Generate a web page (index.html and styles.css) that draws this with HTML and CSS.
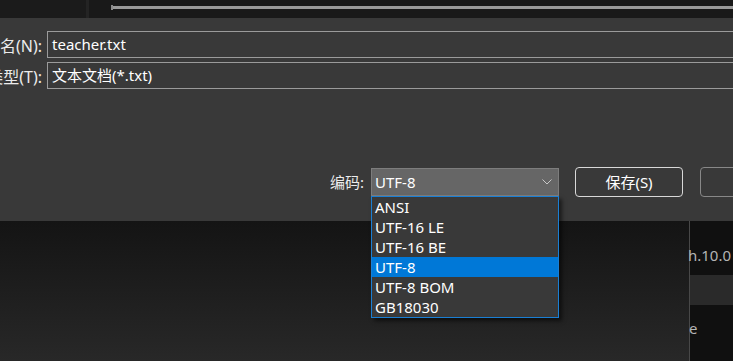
FILE: index.html
```html
<!DOCTYPE html>
<html lang="zh-CN">
<head>
<meta charset="utf-8">
<title>另存为</title>
<link rel="stylesheet" href="styles.css">
</head>
<body>
<div class="screen">
  <div class="topbar">
    <div class="side-col"></div>
    <div class="side-divider"></div>
    <div class="track"><span class="track-nub"></span><span class="track-bar"></span></div>
  </div>

  <div class="dialog">
    <div class="field-row first">
      <div class="label">文件名(N):</div>
      <div class="textbox">teacher.txt</div>
    </div>
    <div class="field-row">
      <div class="label">保存类型(T):</div>
      <div class="textbox">文本文档(*.txt)</div>
    </div>

    <div class="action-row">
      <div class="enc-label">编码:</div>
      <div class="enc-select">
        <div class="enc-value">UTF-8</div>
        <svg class="chevron" width="10" height="6" viewBox="0 0 10 6"><path d="M0.5 0.5 L5 5 L9.5 0.5" fill="none" stroke="#c8c8c8" stroke-width="1"/></svg>
        <ul class="enc-list">
          <li>ANSI</li>
          <li>UTF-16 LE</li>
          <li>UTF-16 BE</li>
          <li class="selected">UTF-8</li>
          <li>UTF-8 BOM</li>
          <li>GB18030</li>
        </ul>
      </div>
      <button class="btn primary">保存(S)</button>
      <button class="btn secondary">取消</button>
    </div>
  </div>

  <div class="lower">
    <div class="backdrop"></div>
    <div class="vline"></div>
    <div class="side-panel">
      <div class="sp-text one">h.10.0</div>
      <div class="sp-band"></div>
      <div class="sp-text two">e</div>
    </div>
  </div>
</div>
</body>
</html>
```

FILE: styles.css
```css
html, body {
  margin: 0;
  padding: 0;
  background: #161616;
}

.screen {
  width: 733px;
  height: 361px;
  overflow: hidden;
  display: flex;
  flex-direction: column;
  font-family: "Noto Sans", "Noto Sans CJK SC", sans-serif;
  font-size: 15px;
  color: #ffffff;
}

/* top strip */
.topbar {
  height: 18px;
  flex: none;
  display: flex;
  background: #191919;
}
.side-col {
  width: 86px;
  background: #1b1b1b;
}
.side-divider {
  width: 3px;
  background: #242424;
}
.track {
  flex: 1;
  display: flex;
  align-items: flex-start;
  padding-left: 22px;
  padding-top: 5px;
}
.track-nub {
  width: 2px;
  height: 5px;
  background: #8a8a8a;
}
.track-bar {
  flex: 1;
  height: 3px;
  margin-top: 1px;
  background: #9a9a9a;
}

/* dialog */
.dialog {
  height: 203px;
  flex: none;
  background: #393939;
  display: flex;
  flex-direction: column;
  position: relative;
  z-index: 2;
}
.field-row {
  display: flex;
  align-items: center;
  gap: 5px;
  margin-top: 4px;
  height: 27px;
}
.field-row.first {
  margin-top: 13px;
}
.label {
  width: 42px;
  flex: none;
  display: flex;
  justify-content: flex-end;
  white-space: nowrap;
  color: #ececec;
  font-size: 16px;
}
.textbox {
  width: 720px;
  flex: none;
  height: 27px;
  box-sizing: border-box;
  border: 1px solid #9b9b9b;
  background: #393939;
  padding: 0 4px;
  line-height: 25px;
  white-space: nowrap;
}

.action-row {
  display: flex;
  align-items: center;
  margin-top: 78px;
  padding-left: 330px;
  height: 29px;
}
.enc-label {
  color: #ececec;
  width: 41px;
  flex: none;
}
.enc-select {
  position: relative;
  width: 188px;
  height: 28px;
  box-sizing: border-box;
  border: 1px solid #7d7d7d;
  background: #666666;
  display: flex;
  align-items: center;
  padding-left: 3px;
  flex: none;
}
.enc-value {
  flex: 1;
  line-height: 26px;
}
.chevron {
  margin-right: 6px;
  margin-top: 1px;
}
.enc-list {
  position: absolute;
  left: -1px;
  top: 27px;
  width: 188px;
  box-sizing: border-box;
  margin: 0;
  padding: 0;
  list-style: none;
  border: 1px solid #1a7fd4;
  background: #393939;
  box-shadow: 3px 3px 4px rgba(0, 0, 0, 0.55);
}
.enc-list li {
  height: 20px;
  line-height: 20px;
  padding-left: 3px;
  white-space: nowrap;
}
.enc-list li.selected {
  background: #0078d7;
}

.btn {
  flex: none;
  height: 30px;
  box-sizing: border-box;
  border-radius: 4px;
  background: #393939;
  color: #ffffff;
  font-family: "Noto Sans", "Noto Sans CJK SC", sans-serif;
  font-size: 15px;
  padding: 0;
}
.btn.primary {
  width: 108px;
  margin-left: 16px;
  border: 1px solid #d8d8d8;
}
.btn.secondary {
  width: 108px;
  margin-left: 17px;
  border: 1px solid #888888;
  color: transparent;
}

/* lower background */
.lower {
  flex: 1;
  display: flex;
}
.backdrop {
  width: 689px;
  flex: none;
  background: linear-gradient(#141414, #282828);
}
.vline {
  width: 1px;
  flex: none;
  background: #484848;
}
.side-panel {
  flex: 1;
  background: #101010;
  display: flex;
  flex-direction: column;
  overflow: visible;
  white-space: nowrap;
}
.sp-text {
  color: #b4b4b4;
  font-size: 15px;
  height: 20px;
  line-height: 20px;
  margin-left: -2px;
}
.sp-text.one {
  margin-top: 24px;
}
.sp-band {
  height: 30px;
  margin-top: 10px;
  background: #2a2a2a;
}
.sp-text.two {
  margin-top: 13px;
  margin-left: -1px;
}
```
